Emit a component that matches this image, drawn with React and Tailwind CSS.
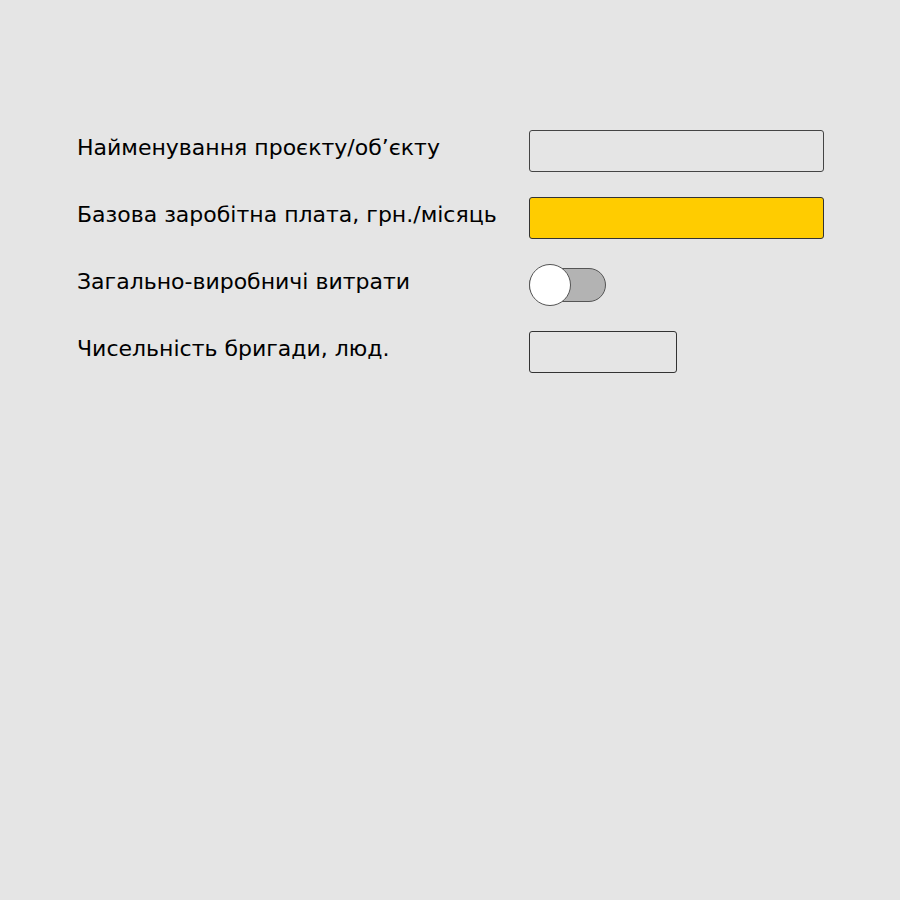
import { useState } from "react";

function Toggle() {
    const [on, setOn] = useState(false);
    return (
        <button type="button" onClick={() => setOn(!on)}
            className="relative w-[77px] h-[42px] flex items-center">
            <span className={"absolute left-0 w-[77px] h-[34px] rounded-full border border-[#555] " + (on ? "bg-[#ffcc00]" : "bg-[#b3b3b3]")} />
            <span className={"absolute top-0 w-[42px] h-[42px] rounded-full bg-white border border-[#555] " + (on ? "left-[35px]" : "left-0")} />
        </button>
    );
}

export default function App() {
    const rows = "h-[42px] flex items-center";
    const label = "text-[22px] leading-none text-black -mt-[6px]";
    return (
        <div className="min-h-[900px] bg-[#e5e5e5] pl-[77px] pt-[130px]" style={{ fontFamily: '"DejaVu Sans", sans-serif' }}>
            <div className="grid grid-cols-[452px_1fr] gap-y-[25px]">
                <div className={rows}><span className={label}>Найменування проєкту/об’єкту</span></div>
                <div className={rows}>
                    <input className="w-[295px] h-[42px] border border-[#444] rounded-[3px] bg-transparent outline-none px-2" />
                </div>

                <div className={rows}><span className={label}>Базова заробітна плата, грн./місяць</span></div>
                <div className={rows}>
                    <input className="w-[295px] h-[42px] border border-[#333] rounded-[3px] bg-[#ffcc00] outline-none px-2" />
                </div>

                <div className={rows}><span className={label}>Загально-виробничі витрати</span></div>
                <div className={rows}><Toggle /></div>

                <div className={rows}><span className={label}>Чисельність бригади, люд.</span></div>
                <div className={rows}>
                    <input className="w-[148px] h-[42px] border border-[#333] rounded-[3px] bg-transparent outline-none px-2" />
                </div>
            </div>
        </div>
    );
}
